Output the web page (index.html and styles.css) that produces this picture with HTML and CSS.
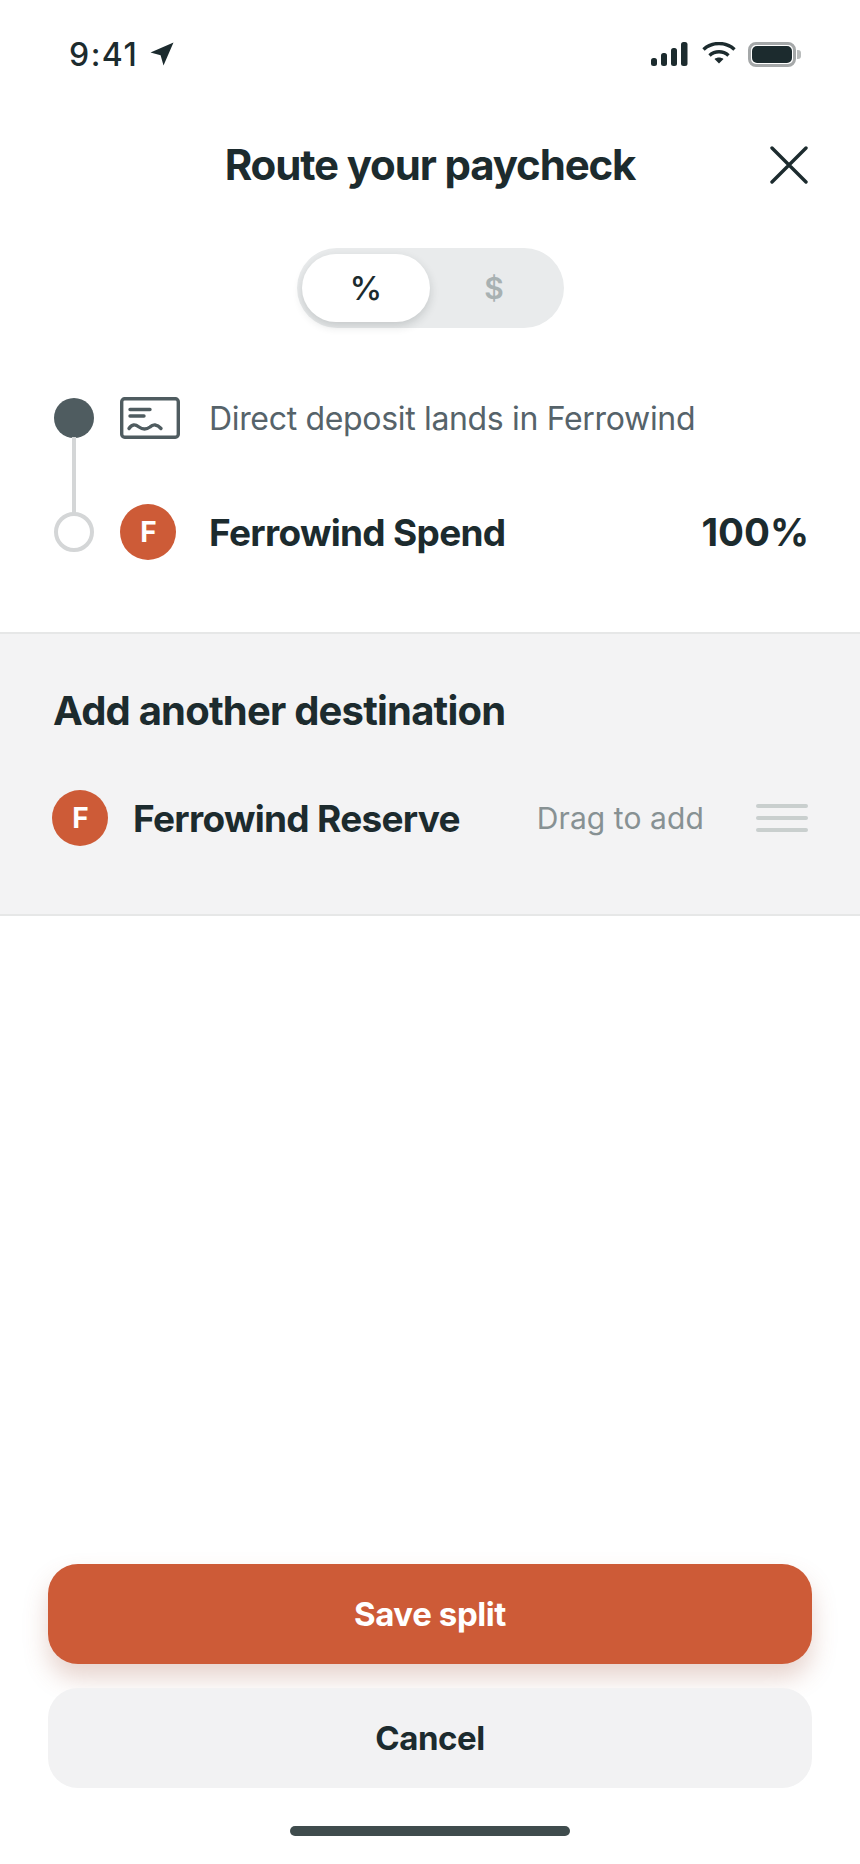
FILE: index.html
```html
<!DOCTYPE html>
<html lang="en">
<head>
    <meta charset="UTF-8">
    <meta name="viewport" content="width=device-width, initial-scale=1.0">
    <title>Route your paycheck</title>
    <link rel="stylesheet" href="styles.css">
</head>
<body>
    <!-- Status bar -->
    <div class="status-bar">
        <div class="status-left">
            <span class="status-time">9:41</span>
            <svg class="status-arrow" width="24" height="24" viewBox="0 0 24 24"><path d="M23.5 .5 L.5 10.5 L10.6 13.2 L13.5 23.5 Z" fill="#1c2b2e"/></svg>
        </div>
        <div class="status-right">
            <svg width="37" height="25" viewBox="0 0 37 25" fill="#1c2b2e">
                <rect x="0" y="16" width="6" height="8" rx="2.5"/>
                <rect x="10" y="11" width="6" height="13" rx="2.5"/>
                <rect x="20" y="6" width="6" height="18" rx="2.5"/>
                <rect x="30" y="0" width="6.5" height="24" rx="2.5"/>
            </svg>
            <svg width="34" height="22" viewBox="0 0 34 22" fill="none" stroke="#1c2b2e" stroke-width="3.4">
                <path d="M1.5 7.5 C10 -0.5 24 -0.5 32.5 7.5"/>
                <path d="M7.5 13.5 C13 8.5 21 8.5 26.5 13.5"/>
                <path d="M12.5 17 L17 21.5 L21.5 17 C19 15 15 15 12.5 17 Z" fill="#1c2b2e" stroke="none"/>
            </svg>
            <div class="battery"><div class="battery-fill"></div></div>
            <div class="battery-nub"></div>
        </div>
    </div>

    <!-- Header -->
    <header class="header">
        <h1>Route your paycheck</h1>
        <svg class="close-icon" width="38" height="38" viewBox="0 0 38 38" fill="none" stroke="#1c2b2e" stroke-width="3.4" stroke-linecap="round"><path d="M2 2 L36 36 M36 2 L2 36"/></svg>
    </header>

    <div class="toggle">
        <div class="toggle-option active">%</div>
        <div class="toggle-option">$</div>
    </div>

    <!-- Current route -->
    <div class="route">
        <div class="route-row first">
            <div class="node filled"></div>
            <svg class="check-icon" width="60" height="42" viewBox="0 0 60 42" fill="none" stroke="#4f5c60" stroke-width="3.4" stroke-linecap="round" stroke-linejoin="round">
                <rect x="1.7" y="1.7" width="56.6" height="38.6" rx="3"/>
                <path d="M10 12.5 H30 M10 19 H24"/>
                <path d="M9 31.5 C12 27 15 27 19 30 C23 33 26 33 30 30 C33 27 37 27 41 31.5"/>
            </svg>
            <span class="route-label">Direct deposit lands in Ferrowind</span>
        </div>
        <div class="route-row second">
            <div class="node hollow"></div>
            <div class="avatar">F</div>
            <span class="account-name spend">Ferrowind Spend</span>
            <span class="percent">100%</span>
        </div>
    </div>

    <!-- Destinations -->
    <section class="destinations">
        <h2>Add another destination</h2>
        <div class="dest-row">
            <div class="avatar">F</div>
            <span class="account-name">Ferrowind Reserve</span>
            <span class="drag-hint">Drag to add</span>
            <div class="drag-handle"><i></i><i></i><i></i></div>
        </div>
    </section>

    <!-- Actions -->
    <footer class="actions">
        <button class="btn btn-save">Save split</button>
        <button class="btn btn-cancel">Cancel</button>
        <div class="home-bar"></div>
    </footer>
</body>
</html>
```

FILE: styles.css
```css
* {
    box-sizing: border-box;
}
body {
    margin: 0;
    width: 860px;
    height: 1864px;
    background-color: #fff;
    color: #1c2b2e;
    font-family: Inter, "Liberation Sans", sans-serif;
    display: flex;
    flex-direction: column;
}
.status-bar {
    height: 66px;
    padding: 42px 59px 0 69px;
    display: flex;
    justify-content: space-between;
}
.status-left {
    display: flex;
    align-items: center;
    gap: 12px;
    height: 24px;
}
.status-time {
    font-size: 32px;
    font-weight: 500;
    letter-spacing: 1.5px;
}
.status-right {
    display: flex;
    align-items: flex-start;
    gap: 14px;
}
.battery {
    width: 48px;
    height: 25px;
    border: 3px solid #a5a8a9;
    border-radius: 8px;
    padding: 1px;
    margin-left: -2px;
}
.battery-fill {
    height: 100%;
    background-color: #1c2b2e;
    border-radius: 5px;
}
.battery-nub {
    width: 4px;
    height: 9px;
    margin: 8px 0 0 -13px;
    background-color: #b9bcbc;
    border-radius: 0 3px 3px 0;
}
.header {
    position: relative;
    height: 60px;
    margin-top: 68px;
    display: flex;
    justify-content: center;
    align-items: center;
}
.header h1 {
    margin: 0;
    font-size: 42px;
    font-weight: 700;
    letter-spacing: -1.15px;
}
.close-icon {
    position: absolute;
    right: 52px;
    top: 12px;
}
.toggle {
    width: 267px;
    height: 80px;
    margin: 54px 0 0 297px;
    padding: 6px 5px;
    background-color: #e9ebec;
    border-radius: 40px;
    display: flex;
}
.toggle-option {
    width: 128px;
    height: 68px;
    border-radius: 34px;
    display: flex;
    align-items: center;
    justify-content: center;
    font-size: 30px;
    font-weight: 600;
    color: #a8b1b2;
}
.toggle-option.active {
    background-color: #fff;
    color: #1c2b2e;
    font-size: 33px;
    font-weight: 500;
    box-shadow: 0 4px 10px rgba(40, 50, 50, 0.18);
}
.route {
    padding: 0 51px 0 54px;
    margin-top: 69px;
    height: 235px;
}
.route-row {
    display: flex;
    align-items: center;
    position: relative;
}
.route-row.first {
    height: 42px;
}
.route-row.second {
    height: 56px;
    margin-top: 65px;
}
.node {
    width: 40px;
    height: 40px;
    border-radius: 50%;
    flex-shrink: 0;
}
.node.filled {
    background-color: #4f5c60;
}
.node.hollow {
    border: 4px solid #d4d6d7;
    background-color: #fff;
}
/* connector between the two nodes */
.node.filled::after {
    content: "";
    position: absolute;
    left: 18px;
    top: 40px;
    width: 4px;
    height: 77px;
    background-color: #d4d6d7;
}
.check-icon {
    margin-left: 26px;
    flex-shrink: 0;
}
.route-label {
    margin-left: 29px;
    font-size: 32px;
    letter-spacing: -0.33px;
    color: #56636a;
}
.avatar {
    width: 56px;
    height: 56px;
    border-radius: 50%;
    background-color: #cd5b37;
    color: #fff;
    font-size: 28px;
    font-weight: 700;
    padding-left: 1px;
    display: flex;
    align-items: center;
    justify-content: center;
    flex-shrink: 0;
}
.route-row .avatar {
    margin-left: 26px;
}
.account-name {
    font-size: 37px;
    font-weight: 700;
    letter-spacing: -0.7px;
}
.account-name.spend {
    margin-left: 33px;
}
.percent {
    margin-left: auto;
    font-size: 38.5px;
    font-weight: 700;
}
.destinations {
    height: 284px;
    background-color: #f3f3f4;
    border-top: 2px solid #e6e7e7;
    border-bottom: 2px solid #e6e7e7;
    padding: 50px 52px 0;
}
.destinations h2 {
    margin: 0 0 0 1px;
    font-size: 40px;
    font-weight: 700;
    letter-spacing: -0.8px;
    line-height: 54px;
}
.dest-row {
    display: flex;
    align-items: center;
    margin-top: 52px;
}
.dest-row .account-name {
    margin-left: 25px;
}
.drag-hint {
    margin-left: auto;
    font-size: 30px;
    letter-spacing: 0.1px;
    color: #879193;
}
.drag-handle {
    margin-left: 52px;
    width: 52px;
    display: flex;
    flex-direction: column;
    gap: 8px;
}
.drag-handle i {
    display: block;
    height: 4px;
    background-color: #c9cfce;
    border-radius: 2px;
}
.actions {
    margin-top: auto;
    padding: 0 48px 28px;
    display: flex;
    flex-direction: column;
    gap: 24px;
}
.btn {
    height: 100px;
    border: none;
    border-radius: 30px;
    font-family: inherit;
    font-size: 33px;
    font-weight: 700;
    letter-spacing: -0.4px;
}
.btn-save {
    background-color: #cd5b37;
    color: #fff;
    box-shadow: 0 14px 24px rgba(160, 85, 60, 0.25);
}
.btn-cancel {
    background-color: #f2f2f3;
    color: #1c2b2e;
}
.home-bar {
    width: 280px;
    height: 10px;
    margin: 14px auto 0;
    background-color: #3f4c4d;
    border-radius: 5px;
}
```
